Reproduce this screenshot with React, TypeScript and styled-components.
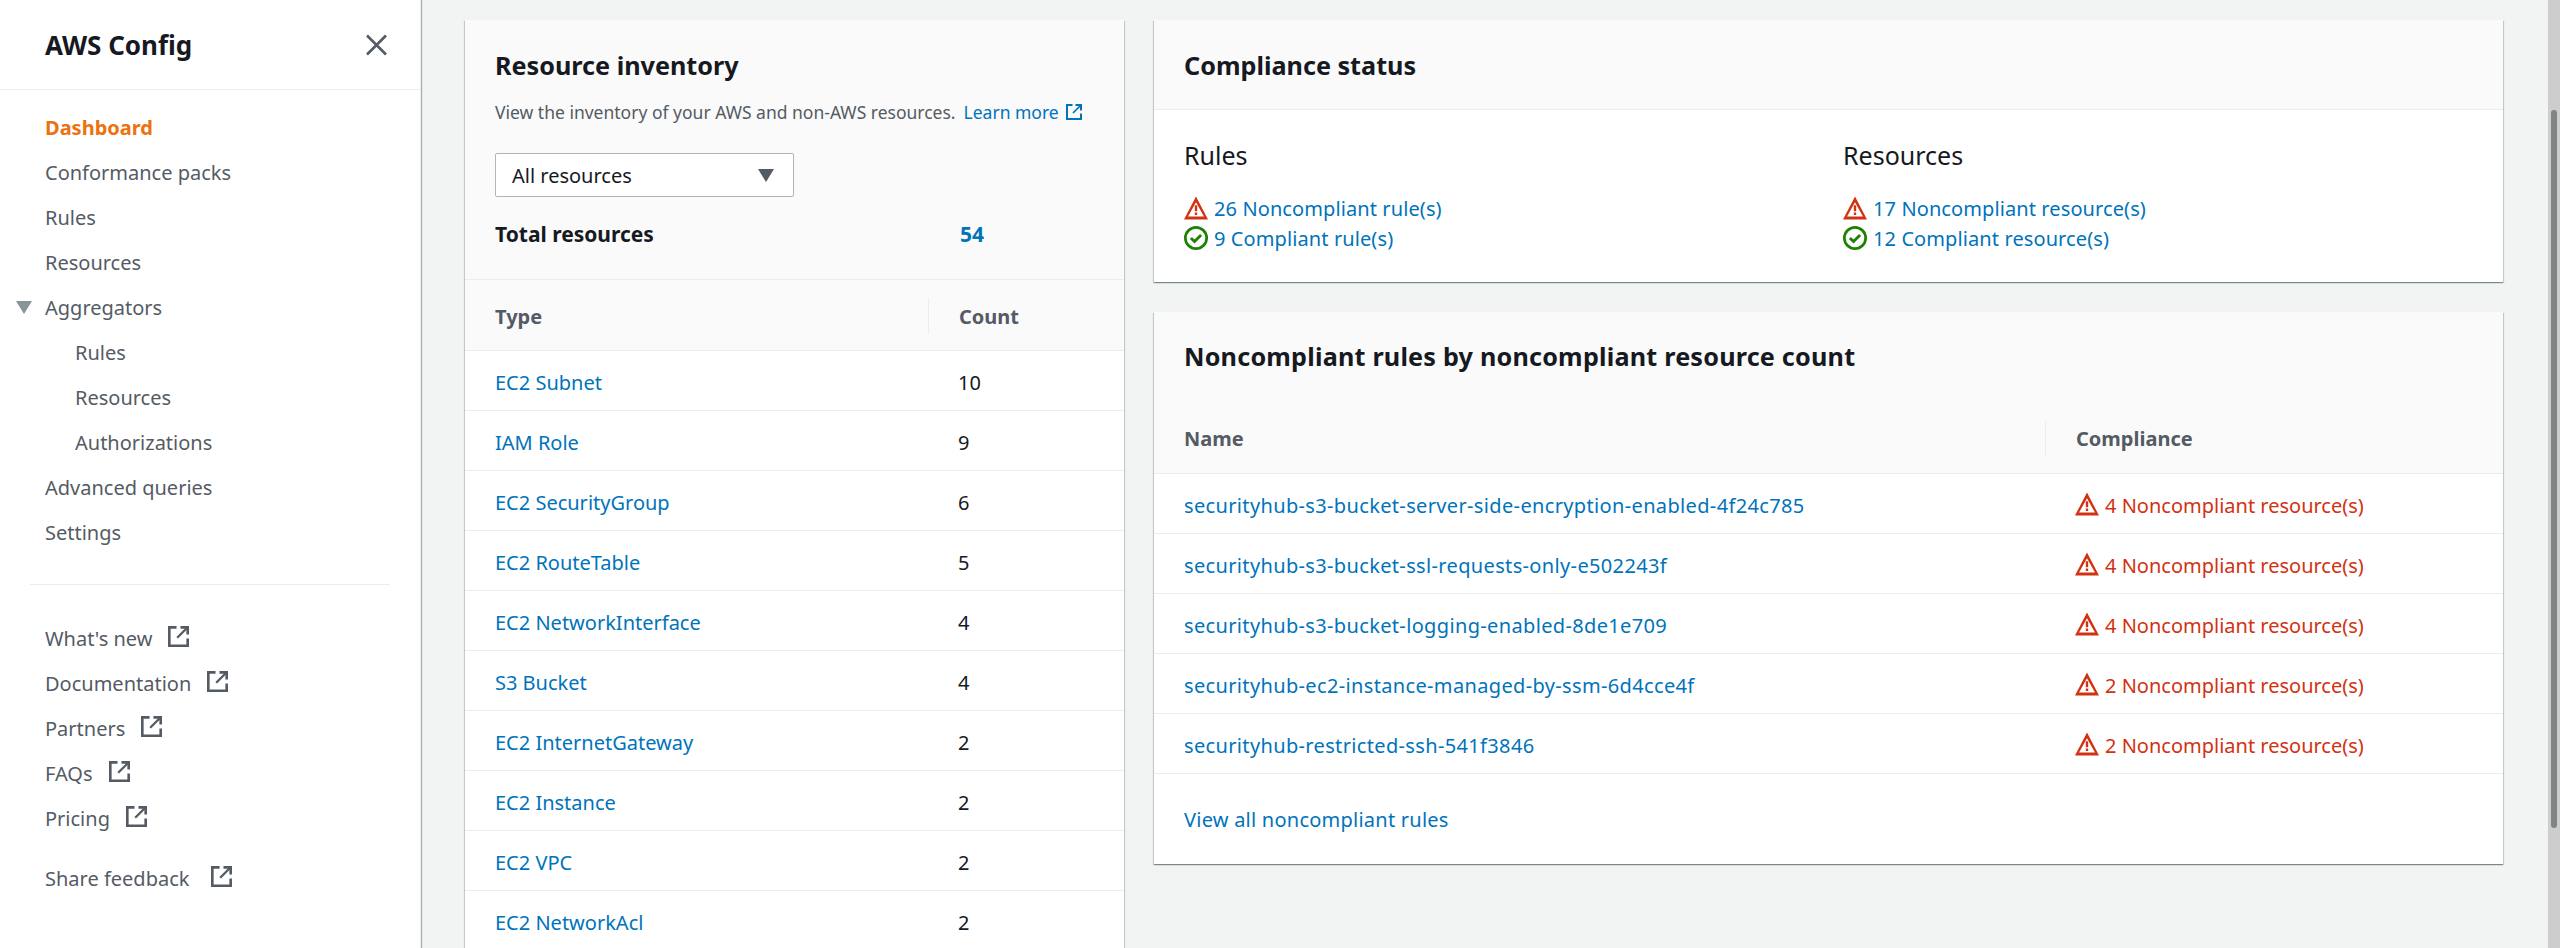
import React from 'react';
import styled, { createGlobalStyle } from 'styled-components';

const GlobalStyle = createGlobalStyle`
  html, body {
    margin: 0;
    padding: 0;
    height: 948px;
    overflow: hidden;
    background: #f2f3f3;
    font-family: "Noto Sans", "Open Sans", sans-serif;
    font-size: 20px;
    color: #16191f;
  }
  * { box-sizing: border-box; }
`;

const Page = styled.div`
  display: flex;
  width: 2560px;
  height: 948px;
  overflow: hidden;
`;

const Sidebar = styled.nav`
  flex: 0 0 421px;
  height: 948px;
  background: #fff;
  box-shadow: 1px 0 1px 0 rgba(0, 28, 36, 0.3);
  border-right: 1px solid #eaeded;
  position: relative;
  z-index: 1;
`;

const SidebarHeader = styled.div`
  display: flex;
  align-items: center;
  justify-content: space-between;
  height: 90px;
  padding: 0 32px 0 45px;
  border-bottom: 1px solid #eaeded;
`;

const SidebarTitle = styled.div`
  font-size: 26px;
  font-weight: 700;
  color: #16191f;
`;

const NavList = styled.div`
  display: flex;
  flex-direction: column;
  padding-top: 15px;
`;

const NavItem = styled.a<{ $active?: boolean; $sub?: boolean }>`
  display: flex;
  align-items: center;
  height: 45px;
  padding-left: ${(p) => (p.$sub ? 75 : 45)}px;
  color: ${(p) => (p.$active ? '#ec7211' : '#545b64')};
  font-weight: ${(p) => (p.$active ? 700 : 400)};
  position: relative;
`;

const Caret = styled.span`
  position: absolute;
  left: 16px;
  top: 16px;
  width: 0;
  height: 0;
  border-left: 8px solid transparent;
  border-right: 8px solid transparent;
  border-top: 13px solid #879596;
`;

const NavDivider = styled.div`
  height: 1px;
  margin: 29px 30px 31px;
  background: #eaeded;
`;

const ExternalItem = styled(NavItem)<{ $spaced?: boolean }>`
  gap: ${(p) => (p.$spaced ? 22 : 16)}px;
  margin-top: ${(p) => (p.$spaced ? 15 : 0)}px;

  svg {
    margin-top: -4px;
  }
`;

const Main = styled.main`
  flex: 1;
  display: grid;
  grid-template-columns: 659px 1349px;
  column-gap: 30px;
  align-items: start;
  padding: 20px 0 0 44px;
  overflow: hidden;
`;

const Card = styled.section`
  background: #fff;
  box-shadow: 0 1px 1px 0 rgba(0, 28, 36, 0.3), 1px 1px 1px 0 rgba(0, 28, 36, 0.15), -1px 1px 1px 0 rgba(0, 28, 36, 0.15);
`;

const RightColumn = styled.div`
  display: flex;
  flex-direction: column;
  gap: 30px;
`;

const CardTop = styled.div`
  background: #fafafa;
  padding: 25px 30px 0;
`;

const CardTitle = styled.h2`
  margin: 0;
  font-size: 25.2px;
  line-height: 40px;
  font-weight: 700;
  color: #16191f;
`;

const WideTitle = styled(CardTitle)`
  letter-spacing: 0.2px;
`;

const Description = styled.p`
  display: flex;
  align-items: center;
  margin: 12px 0 0;
  height: 30px;
  font-size: 17.5px;
  color: #545b64;
`;

const Link = styled.a`
  color: #0073bb;
  display: inline-flex;
  align-items: center;
`;

const LearnMore = styled(Link)`
  margin-left: 8px;
  gap: 7px;
`;

const StatusLink = styled(Link)`
  letter-spacing: 0.1px;
`;

const RuleLink = styled(Link)`
  letter-spacing: 0.35px;
`;

const FooterLink = styled(Link)`
  letter-spacing: 0.24px;
`;

const SelectBox = styled.div`
  display: flex;
  align-items: center;
  justify-content: space-between;
  width: 299px;
  height: 44px;
  margin-top: 26px;
  padding: 0 19px 0 16px;
  background: #fff;
  border: 1px solid #aab7b8;
  border-radius: 2px;
  font-size: 20px;
  color: #16191f;
`;

const SelectCaret = styled.span`
  width: 0;
  height: 0;
  border-left: 8px solid transparent;
  border-right: 8px solid transparent;
  border-top: 13px solid #545b64;
`;

const TotalRow = styled.div`
  display: grid;
  grid-template-columns: 465px 1fr;
  align-items: center;
  height: 30px;
  margin-top: 22px;
  font-size: 21px;
  font-weight: 700;
`;

const TotalValue = styled.span`
  color: #0073bb;
`;

const TotalSpacer = styled.div`
  height: 30px;
  background: #fafafa;
  margin: 0 -30px;
`;

const HeaderRow = styled.div<{ $columns: string; $lined?: boolean }>`
  display: grid;
  grid-template-columns: ${(p) => p.$columns};
  align-items: center;
  height: 72px;
  padding-top: 2px;
  background: #fafafa;
  border-top: ${(p) => (p.$lined ? '1px solid #eaeded' : 'none')};
  border-bottom: 1px solid #eaeded;
`;

const HeaderCell = styled.div<{ $divided?: boolean }>`
  height: 36px;
  display: flex;
  align-items: center;
  padding-left: 30px;
  font-weight: 700;
  color: #545b64;
  border-left: ${(p) => (p.$divided ? '1px solid #eaeded' : 'none')};
`;

const BodyRow = styled.div<{ $columns: string }>`
  display: grid;
  grid-template-columns: ${(p) => p.$columns};
  align-items: center;
  height: 60px;
  padding-top: 3px;
  border-bottom: 1px solid #eaeded;
`;

const BodyCell = styled.div`
  display: flex;
  align-items: center;
  gap: 6px;
  padding-left: 30px;
  white-space: nowrap;

  svg {
    margin-top: -2px;
  }
`;

const ErrorText = styled.span`
  color: #d13212;
`;

const StatusHeader = styled.div`
  background: #fafafa;
  height: 90px;
  padding: 25px 30px 0;
  border-bottom: 1px solid #eaeded;
`;

const StatusBody = styled.div`
  display: grid;
  grid-template-columns: 659px 1fr;
  padding: 0 30px;
  height: 172px;
`;

const StatusTitle = styled.h3`
  margin: 0;
  height: 83px;
  padding-top: 27px;
  font-size: 25px;
  line-height: 36px;
  font-weight: 400;
  color: #16191f;
`;

const StatusLine = styled.div`
  display: flex;
  align-items: center;
  gap: 6px;
  height: 30px;
`;

const RulesTitleBar = styled.div`
  background: #fafafa;
  height: 90px;
  padding: 24px 30px 0;
`;

const CardFooter = styled.div`
  display: flex;
  align-items: center;
  height: 90px;
  padding-left: 30px;
`;

const Scrollbar = styled.div`
  position: absolute;
  top: 0;
  right: 0;
  width: 12px;
  height: 948px;
  background: #cdcdcd;
`;

const ScrollThumb = styled.div`
  width: 6px;
  height: 718px;
  margin: 110px 0 0 3px;
  border-radius: 3px;
  background: #808485;
`;

const ExternalIcon = ({ size = 21, color = '#545b64' }: { size?: number; color?: string }) => (
  <svg width={size} height={size} viewBox="0 0 16 16" fill="none" stroke={color} strokeWidth="2" style={{ flex: 'none' }}>
    <path d="M9.5 1H15v5.5" />
    <path d="M15 1 7 9" strokeWidth="1.7" />
    <path d="M15 9.5V15H1V1h5.5" />
  </svg>
);

const WarningIcon = () => (
  <svg width="24" height="24" viewBox="0 0 16 16" fill="#d13212" style={{ flex: 'none' }}>
    <path fillRule="evenodd" d="M8 .4 16 15.7H0zM8 4.2 2.7 13.7h10.6z" />
    <path d="M7.2 6.2h1.6v4H7.2zM7.2 11h1.6v1.7H7.2z" />
  </svg>
);

const CheckIcon = () => (
  <svg width="24" height="24" viewBox="0 0 16 16" fill="none" stroke="#1d8102" strokeWidth="1.8" style={{ flex: 'none' }}>
    <circle cx="8" cy="8" r="7.1" />
    <path d="m4.6 8 2.4 2.4 4.4-4.4" strokeWidth="1.9" />
  </svg>
);

const CloseIcon = () => (
  <svg width="24" height="24" viewBox="0 0 24 24" fill="none" stroke="#545b64" strokeWidth="2.6">
    <path d="M3 2.5 22 21.5M22 2.5 3 21.5" />
  </svg>
);

const navItems = [
  { label: 'Dashboard', active: true },
  { label: 'Conformance packs' },
  { label: 'Rules' },
  { label: 'Resources' },
  { label: 'Aggregators', caret: true },
  { label: 'Rules', sub: true },
  { label: 'Resources', sub: true },
  { label: 'Authorizations', sub: true },
  { label: 'Advanced queries' },
  { label: 'Settings' },
];

const externalItems = ["What's new", 'Documentation', 'Partners', 'FAQs', 'Pricing'];

const inventory = [
  ['EC2 Subnet', 10],
  ['IAM Role', 9],
  ['EC2 SecurityGroup', 6],
  ['EC2 RouteTable', 5],
  ['EC2 NetworkInterface', 4],
  ['S3 Bucket', 4],
  ['EC2 InternetGateway', 2],
  ['EC2 Instance', 2],
  ['EC2 VPC', 2],
  ['EC2 NetworkAcl', 2],
];

const rules = [
  ['securityhub-s3-bucket-server-side-encryption-enabled-4f24c785', 4],
  ['securityhub-s3-bucket-ssl-requests-only-e502243f', 4],
  ['securityhub-s3-bucket-logging-enabled-8de1e709', 4],
  ['securityhub-ec2-instance-managed-by-ssm-6d4cce4f', 2],
  ['securityhub-restricted-ssh-541f3846', 2],
];

const inventoryColumns = '463px 1fr';
const rulesColumns = '891px 1fr';

const App = () => {
  return (
    <Page>
      <GlobalStyle />
      <Sidebar>
        <SidebarHeader>
          <SidebarTitle>AWS Config</SidebarTitle>
          <CloseIcon />
        </SidebarHeader>
        <NavList>
          {navItems.map((item, i) => (
            <NavItem key={i} $active={item.active} $sub={item.sub}>
              {item.caret && <Caret />}
              {item.label}
            </NavItem>
          ))}
          <NavDivider />
          {externalItems.map((label) => (
            <ExternalItem key={label}>
              {label}
              <ExternalIcon />
            </ExternalItem>
          ))}
          <ExternalItem $spaced>
            Share feedback
            <ExternalIcon />
          </ExternalItem>
        </NavList>
      </Sidebar>

      <Main>
        <Card>
          <CardTop>
            <CardTitle>Resource inventory</CardTitle>
            <Description>
              View the inventory of your AWS and non-AWS resources.
              <LearnMore>
                Learn more
                <ExternalIcon size={16} color="#0073bb" />
              </LearnMore>
            </Description>
            <SelectBox>
              All resources
              <SelectCaret />
            </SelectBox>
            <TotalRow>
              Total resources
              <TotalValue>54</TotalValue>
            </TotalRow>
            <TotalSpacer />
          </CardTop>
          <HeaderRow $columns={inventoryColumns} $lined>
            <HeaderCell>Type</HeaderCell>
            <HeaderCell $divided>Count</HeaderCell>
          </HeaderRow>
          {inventory.map(([type, count]) => (
            <BodyRow key={type} $columns={inventoryColumns}>
              <BodyCell>
                <Link>{type}</Link>
              </BodyCell>
              <BodyCell>{count}</BodyCell>
            </BodyRow>
          ))}
        </Card>

        <RightColumn>
          <Card>
            <StatusHeader>
              <CardTitle>Compliance status</CardTitle>
            </StatusHeader>
            <StatusBody>
              <div>
                <StatusTitle>Rules</StatusTitle>
                <StatusLine>
                  <WarningIcon />
                  <StatusLink>26 Noncompliant rule(s)</StatusLink>
                </StatusLine>
                <StatusLine>
                  <CheckIcon />
                  <StatusLink>9 Compliant rule(s)</StatusLink>
                </StatusLine>
              </div>
              <div>
                <StatusTitle>Resources</StatusTitle>
                <StatusLine>
                  <WarningIcon />
                  <StatusLink>17 Noncompliant resource(s)</StatusLink>
                </StatusLine>
                <StatusLine>
                  <CheckIcon />
                  <StatusLink>12 Compliant resource(s)</StatusLink>
                </StatusLine>
              </div>
            </StatusBody>
          </Card>

          <Card>
            <RulesTitleBar>
              <WideTitle>Noncompliant rules by noncompliant resource count</WideTitle>
            </RulesTitleBar>
            <HeaderRow $columns={rulesColumns}>
              <HeaderCell>Name</HeaderCell>
              <HeaderCell $divided>Compliance</HeaderCell>
            </HeaderRow>
            {rules.map(([name, count]) => (
              <BodyRow key={name} $columns={rulesColumns}>
                <BodyCell>
                  <RuleLink>{name}</RuleLink>
                </BodyCell>
                <BodyCell>
                  <WarningIcon />
                  <ErrorText>{count} Noncompliant resource(s)</ErrorText>
                </BodyCell>
              </BodyRow>
            ))}
            <CardFooter>
              <FooterLink>View all noncompliant rules</FooterLink>
            </CardFooter>
          </Card>
        </RightColumn>
      </Main>

      <Scrollbar>
        <ScrollThumb />
      </Scrollbar>
    </Page>
  );
};

export default App;
